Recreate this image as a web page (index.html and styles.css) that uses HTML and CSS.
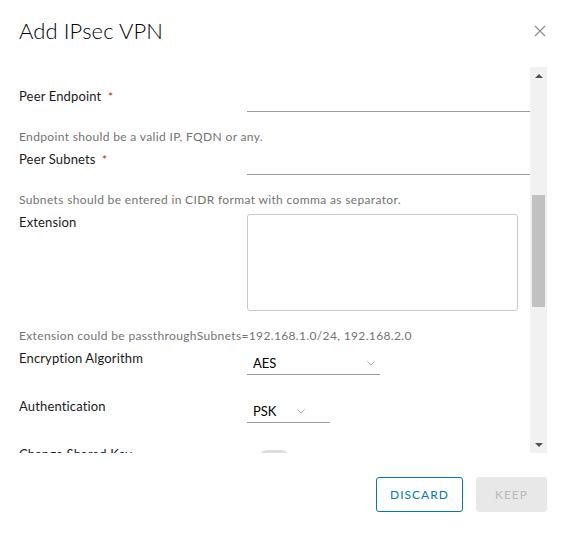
FILE: index.html
```html
<!DOCTYPE html>
<html>
<head>
<meta charset="utf-8">
<link rel="stylesheet" href="styles.css">
</head>
<body>
<div class="dialog">
  <div class="header">
    <h1 class="title">Add IPsec VPN</h1>
    <button class="close" aria-label="Close">
      <svg width="12" height="12" viewBox="0 0 12 12"><path d="M1 1L11 11M11 1L1 11" stroke="#8c8c8c" stroke-width="1.2" fill="none"/></svg>
    </button>
  </div>
  <div class="body">
    <div class="scroll">
      <div class="group">
        <div class="row">
          <div class="label">Peer Endpoint <span class="req">*</span></div>
          <div class="input wide"></div>
        </div>
        <div class="helper">Endpoint should be a valid IP, FQDN or any.</div>
      </div>
      <div class="group">
        <div class="row">
          <div class="label">Peer Subnets <span class="req">*</span></div>
          <div class="input wide"></div>
        </div>
        <div class="helper">Subnets should be entered in CIDR format with comma as separator.</div>
      </div>
      <div class="group">
        <div class="row">
          <div class="label">Extension</div>
          <div class="textarea"></div>
        </div>
        <div class="helper">Extension could be passthroughSubnets=192.168.1.0/24, 192.168.2.0</div>
      </div>
      <div class="group">
        <div class="row">
          <div class="label">Encryption Algorithm</div>
          <div class="select sel-aes"><span>AES</span><svg class="chev" width="8" height="5" viewBox="0 0 8 5"><path d="M0.5 0.5L4 4L7.5 0.5" stroke="#a6a6a6" stroke-width="1" fill="none"/></svg></div>
        </div>
      </div>
      <div class="group gap">
        <div class="row">
          <div class="label">Authentication</div>
          <div class="select sel-psk"><span>PSK</span><svg class="chev" width="8" height="5" viewBox="0 0 8 5"><path d="M0.5 0.5L4 4L7.5 0.5" stroke="#a6a6a6" stroke-width="1" fill="none"/></svg></div>
        </div>
      </div>
      <div class="group gap">
        <div class="row">
          <div class="label">Change Shared Key</div>
          <div class="toggle"></div>
        </div>
      </div>
    </div>
    <div class="scrollbar">
      <div class="arrow up"></div>
      <div class="track"><div class="thumb"></div></div>
      <div class="arrow down"></div>
    </div>
  </div>
  <div class="footer">
    <button class="btn outline">DISCARD</button>
    <button class="btn disabled">KEEP</button>
  </div>
</div>
</body>
</html>
```
FILE: styles.css
```css
html, body {
  margin: 0;
  padding: 0;
  background: #fff;
}
body {
  font-family: Lato, "Open Sans", sans-serif;
  color: #313131;
}
.dialog {
  width: 566px;
  height: 534px;
  box-sizing: border-box;
  padding: 0 19px 0 19px;
  display: flex;
  flex-direction: column;
}
.header {
  display: flex;
  align-items: center;
  justify-content: space-between;
  height: 67px;
  padding-bottom: 6px;
  box-sizing: border-box;
}
.title {
  margin: 0;
  font-size: 22px;
  font-weight: 300;
  color: #000;
  letter-spacing: 0.1px;
  line-height: 26px;
}
.close {
  border: none;
  background: none;
  padding: 0;
  margin-right: 1px;
  width: 12px;
  height: 12px;
  display: flex;
}
.body {
  display: flex;
  height: 386px;
}
.scroll {
  flex: 1;
  overflow: hidden;
  padding-top: 20px;
  box-sizing: border-box;
}
.group {
  margin-bottom: 4px;
}
.group.gap {
  margin-top: 22px;
}
.row {
  display: flex;
  align-items: flex-start;
}
.label {
  width: 228px;
  flex: none;
  font-size: 13px;
  line-height: 18px;
  letter-spacing: 0.15px;
  color: #1b1b1b;
}
.req {
  color: #c92100;
  font-size: 12px;
  margin-left: 3px;
}
.input {
  height: 25px;
  box-sizing: border-box;
  border-bottom: 1px solid #9a9a9a;
}
.input.wide {
  flex: 1;
}
.helper {
  margin-top: 16px;
  font-size: 12px;
  line-height: 18px;
  letter-spacing: 0.35px;
  color: #737373;
}
.textarea {
  margin-top: 1px;
  width: 271px;
  height: 97px;
  box-sizing: border-box;
  border: 1px solid #c8c8c8;
  border-radius: 3px;
}
.select {
  height: 26px;
  box-sizing: border-box;
  border-bottom: 1px solid #9a9a9a;
  padding: 5px 0 2px 6px;
  display: flex;
  align-items: center;
  font-size: 13px;
  line-height: 18px;
  color: #000;
}
.select span {
  flex: 1;
}
.sel-aes {
  width: 133px;
  padding-right: 5px;
}
.sel-psk {
  width: 83px;
  padding-right: 8px;
}
.sel-psk span {
  flex: none;
  width: 44px;
}
.chev {
  display: block;
}
.toggle {
  margin-top: 5px;
  margin-left: 11px;
  width: 32px;
  height: 18px;
  border-radius: 9px;
  background: #dcdcdc;
}
.scrollbar {
  width: 17px;
  flex: none;
  background: #f1f1f1;
  display: flex;
  flex-direction: column;
  align-items: center;
}
.arrow {
  height: 17px;
  width: 17px;
  display: flex;
  align-items: center;
  justify-content: center;
  flex: none;
}
.arrow::before {
  content: "";
  width: 0;
  height: 0;
  border-left: 4px solid transparent;
  border-right: 4px solid transparent;
}
.arrow.up::before {
  border-bottom: 4px solid #505050;
}
.arrow.down::before {
  border-top: 4px solid #505050;
}
.track {
  flex: 1;
  width: 100%;
  display: flex;
  justify-content: center;
  padding-top: 111px;
  box-sizing: border-box;
}
.thumb {
  width: 13px;
  height: 112px;
  background: #c1c1c1;
}
.footer {
  display: flex;
  justify-content: flex-end;
  gap: 13px;
  padding-top: 24px;
}
.btn {
  height: 35px;
  box-sizing: border-box;
  border-radius: 3px;
  font-family: Lato, "Open Sans", sans-serif;
  font-size: 12px;
  letter-spacing: 1px;
  padding: 0;
  cursor: pointer;
}
.btn.outline {
  width: 87px;
  background: #fff;
  border: 1px solid #0079b8;
  color: #0079b8;
}
.btn.disabled {
  width: 71px;
  background: #e8e8e8;
  border: 1px solid #e8e8e8;
  color: #b9b9b9;
}
```
